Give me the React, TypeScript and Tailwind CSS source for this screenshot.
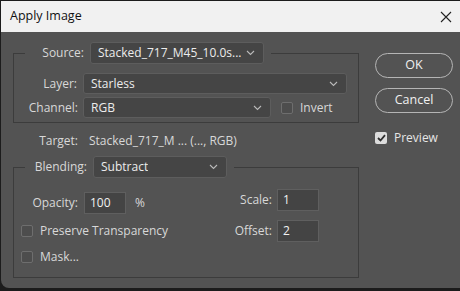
function Chevron() {
  return (
    <svg width="9" height="6" viewBox="0 0 9 6" className="shrink-0">
      <path d="M1 1 L4.5 4.5 L8 1" fill="none" stroke="#b9b9b9" strokeWidth="1.1" />
    </svg>
  );
}

function Select({ value, className }: { value: string; className: string }) {
  return (
    <div className={`flex items-center justify-between rounded-[3px] border border-[#5d5d5d] bg-[#454545] pl-[7px] pr-[8px] text-[#ececec] ${className}`}>
      <span className="truncate">{value}</span>
      <Chevron />
    </div>
  );
}

function Box({ checked }: { checked?: boolean }) {
  if (checked) {
    return (
      <div className="flex h-[12px] w-[12px] shrink-0 items-center justify-center rounded-[2px] bg-[#dcdcdc]">
        <svg width="9" height="8" viewBox="0 0 9 8">
          <path d="M1 4 L3.5 6.5 L8 1.2" fill="none" stroke="#2e2e2e" strokeWidth="1.8" />
        </svg>
      </div>
    );
  }
  return <div className="h-[12px] w-[12px] shrink-0 rounded-[2px] border border-[#6e6e6e] bg-[#4d4d4d]" />;
}

function Field({ value }: { value: string }) {
  return (
    <div className="flex h-[22px] w-[42px] items-center border border-[#5f5f5f] bg-[#444444] pl-[5px] text-[#f2f2f2]">
      {value}
    </div>
  );
}

export default function App() {
  return (
    <div className="h-[291px] w-[460px] bg-[#1c1c1c] pl-px pt-px text-[12px] text-[#d8d8d8]" style={{ fontFamily: '"Open Sans", "Noto Sans", sans-serif' }}>
      <div className="flex h-[287px] flex-col overflow-hidden rounded-bl-[8px] bg-[#535353]">
        {/* title bar */}
        <div className="flex h-[31px] shrink-0 items-center justify-between bg-[#f1f1f1] pl-[9px] pr-[8px] text-[#111]">
          <span className="text-[12.5px]">Apply Image</span>
          <svg width="12" height="12" viewBox="0 0 12 12">
            <path d="M1 1 L11 11 M11 1 L1 11" stroke="#222" strokeWidth="1.1" />
          </svg>
        </div>

        <div className="flex pl-[12px] pt-[10px]">
          {/* left column */}
          <div className="flex w-[346px] flex-col">
            <fieldset className="border border-[#3c3c3c] pb-[4px]">
              <legend className="ml-[11px] px-[7px]">
                <div className="flex items-center">
                  <span className="w-[52px] text-right">Source:</span>
                  <Select value="Stacked_717_M45_10.0s..." className="ml-[6px] h-[22px] w-[174px]" />
                </div>
              </legend>
              <div className="mt-[9px] flex items-center">
                <span className="w-[63px] text-right">Layer:</span>
                <Select value="Starless" className="ml-[6px] h-[21px] w-[264px]" />
              </div>
              <div className="mt-[3px] flex items-center">
                <span className="w-[64px] text-right">Channel:</span>
                <Select value="RGB" className="ml-[5px] h-[21px] w-[188px]" />
                <div className="ml-[10px] flex items-center gap-[7px]">
                  <Box />
                  <span>Invert</span>
                </div>
              </div>
            </fieldset>

            <div className="mt-[10px] flex h-[16px] items-center">
              <span className="w-[65px] text-right">Target:</span>
              <span className="ml-[11px]">Stacked_717_M ... (..., RGB)</span>
            </div>

            <fieldset className="mt-[7px] border border-[#3c3c3c] pb-[12px]">
              <legend className="ml-[11px] px-[7px]">
                <div className="flex items-center">
                  <span className="w-[55px] text-right">Blending:</span>
                  <Select value="Subtract" className="ml-[6px] h-[22px] w-[134px]" />
                </div>
              </legend>
              <div className="flex justify-between pr-[39px]">
                <div className="flex flex-col pl-[7px] pt-[14px]">
                  <div className="flex items-center">
                    <span className="w-[57px] text-right">Opacity:</span>
                    <div className="ml-[6px]">
                      <Field value="100" />
                    </div>
                    <span className="ml-[9px]">%</span>
                  </div>
                  <div className="mt-[9px] flex h-[16px] items-center gap-[7px]">
                    <Box />
                    <span>Preserve Transparency</span>
                  </div>
                  <div className="mt-[10px] flex h-[16px] items-center gap-[7px]">
                    <Box />
                    <span>Mask...</span>
                  </div>
                </div>
                <div className="flex flex-col gap-[9px] pt-[11px]">
                  <div className="flex items-center">
                    <span className="w-[40px] text-right">Scale:</span>
                    <div className="ml-[5px]">
                      <Field value="1" />
                    </div>
                  </div>
                  <div className="flex items-center">
                    <span className="w-[40px] text-right">Offset:</span>
                    <div className="ml-[5px]">
                      <Field value="2" />
                    </div>
                  </div>
                </div>
              </div>
            </fieldset>
          </div>

          {/* right column */}
          <div className="ml-[16px] flex w-[78px] flex-col pt-[11px]">
            <button className="h-[25px] rounded-full border-[1.5px] border-[#b5b5b5] text-[12.5px] text-[#f0f0f0]">OK</button>
            <button className="mt-[10px] h-[25px] rounded-full border-[1.5px] border-[#b5b5b5] text-[12.5px] text-[#f0f0f0]">Cancel</button>
            <div className="mt-[16px] flex items-center gap-[7px]">
              <Box checked />
              <span className="text-[#e6e6e6]">Preview</span>
            </div>
          </div>
        </div>
      </div>
    </div>
  );
}
